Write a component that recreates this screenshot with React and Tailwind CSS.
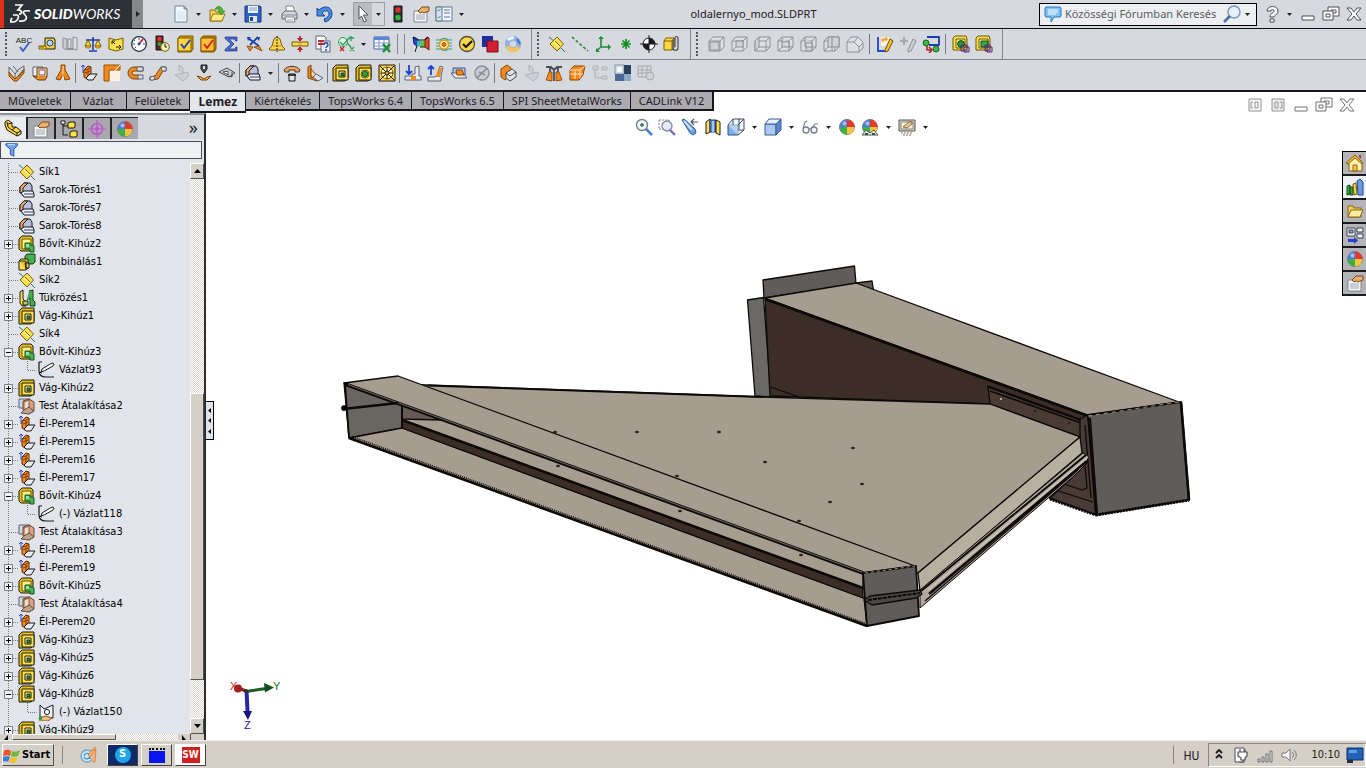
import React from "react";

const c = (x, y, r) => `M${x - r} ${y}a${r} ${r} 0 1 0 ${2 * r} 0a${r} ${r} 0 1 0 ${-2 * r} 0z`;
const K = "#1a1a1a";
const Y = "#ffe14a";
const YD = "#7a5c00";
const O = "#f28a1c";
const B = "#1c3fae";
const G = "#8d9094";
const N = "none";

const CUT = [
  ["M1 4l3-3h12v13l-3 3H1z", "#e8bf1a", K],
  ["M4 4h12v12H4z", Y, K],
  ["M7 7h6v6H7z", "#fff4a0", K],
  ["M9 9h3v3H9z", "#2f8f3c", "#113a17"],
];
const BOSS = [
  ["M1 4l3-3h9l2 2v11l-2 2H3l-2-2z", "#e8bf1a", K],
  ["M4 4h9v10H4z", "#fff08a", "#6b5200"],
  ["M7 8h5v2h3l1 1v6h-4v-3H7z", "#47b354", "#14541d"],
  ["M8 9h3v3H8z", "#9be0a0"],
];
const PLANE = [
  ["M1 2l5 4M13 13l4 4", N, "#2a7a62"],
  ["M9 2l6.500 7L9 16 2 9z", Y, YD],
  ["M6 7l6 5", N, "#fff"],
  ["M7 6l5 5", N, YD],
];
const CORNER = [
  ["M2 12V6l4-4h6l2 3v5", "#b8c0dd", K],
  ["M2 6l4-4h4L5 7v5H2z", "#e8a868", K],
  ["M3 12l3-2h9l1 3v3H6z", "#eef0fb", K],
  ["M3 12l3 4M6 13h10", N, "#34416e"],
];
const FLANGE = [
  ["M3 9V1M1 3l2-2 2 2", N, "#2447d8"],
  ["M4 6l4-4 3 1v8l-4 4-3-2z", O, "#5f2d00"],
  ["M8 5v9M4 6l4-1 3-2M5 9l5-2", N, "#7a3a00"],
  ["M6 14l4-4h7l-4 6H8z", "#e8ebef", K],
];
const BEND = [
  ["M1 2h11v9H1z", "#cfd6e6", "#59607a"],
  ["M5 4l6-2 5 3v9l-5 3-6-4z", "#d8a183", "#6a4634"],
  ["M6 5l5-2v8l-5 2z", "#f3d9c6", "#8a5a40"],
  ["M11 10l5 4-5 3-8-1 3-3z", "#c5a189", "#5e5148"],
];
const SPHERE = [
  [c(9, 9, 7.5), "#e8e8e8", "#777"],
  ["M9 9V1.500A7.500 7.500 0 0 1 16.500 9z", "#e33a30"],
  ["M9 9h7.500A7.500 7.500 0 0 1 9 16.500z", "#f0c63c"],
  ["M9 9v7.500A7.500 7.500 0 0 1 1.500 9z", "#3cb043"],
  ["M9 9H1.500A7.500 7.500 0 0 1 9 1.500z", "#4b7fe0"],
  [c(6.5, 5.5, 2), "#ffffff88"],
];
const CARD = [
  ["M2 6h13v11H2z", "#f6f6f6", "#80858c"],
  ["M4 10h9M4 12h9M4 14h9", N, "#9aa4b5"],
  ["M6 6l4-4h7v4l-5 2-2-1-2 1z", "#e9b06c", "#77481c"],
];
const cube = (extra) => [
  ["M1 6h11v10H1zM1 6l4-4h11v10l-4 4M12 6l4-4", "#dde0e4", G],
  [extra, "#cfd2d6", G],
];

const ICONS = {
  newdoc: [["M3 1h9l3 3v13H3z", "#f2f8ff", "#74849b"], ["M12 1v3h3z", "#b8c9de", "#74849b"], ["M5 6h8v9H5z", "#e0ecf9"]],
  open: [
    ["M2 5h5l1 2h6v9H2z", "#f4d35a", "#97700c"],
    ["M2 16l3-7h12l-3 7z", "#ffeb8c", "#97700c"],
    ["M7 4c3-4 7-3 8 2h2l-4 4-3-4h2c-1-2-3-2-5-2z", "#4cb92e", "#24750f", 0.6],
  ],
  save: [["M1 1h15l1 1v15H1z", "#2f62c2", "#16367b"], ["M4 1h10v7H4z", "#f0f6ff"], ["M5 3h8M5 5h8", N, "#7da0d6"], ["M5 11h8v6H5z", "#dfe8f5"], ["M6 12h3v4H6z", "#24488f"]],
  print: [["M6 7V1h7l2 6z", "#fff", "#7e8792"], ["M2 9l3-3h10l2 3v5H2z", "#d3d8df", "#5d6672"], ["M5 12h9l1 5H6z", "#fbfbfb", "#7e8792"], ["M3 10h13", N, "#818a96"], ["M7 15h6", N, "#8fa6c8"]],
  undo: [["M1 3l2 2c5-5 13-4 13 4 0 4-3 7-7 8l-1-3c3-1 5-3 5-5 0-4-5-4-7-1l3 3H1z", "#4a8be0", "#164a9c"]],
  cursor: [["M5 1l9 9H9.500l3 6-2.500 1-2.500-6L5 14z", "#fff", "#50545c"]],
  traffic: [["M5 1h8v16H5z", "#2d3138", "#15181c"], [c(9, 5, 2.7), "#e0312d"], [c(9, 12.5, 2.7), "#2ebb3b"]],
  card: CARD,
  options: [["M1 2h16v14H1z", "#f2f7ff", "#64758f"], ["M1 2h6v14H1z", "#d7e2f2", "#64758f"], ["M9 5h6M9 8h6M9 12h6", N, "#4f74bb"], ["M2.500 5l1 1 2-2M2.500 12l1 1 2-2", N, "#1f9c34"]],
  abc: [["M5 12l3 4 6-8", N, "#3f62c9", 2]],
  tape: [["M7 3h9l1 2v9H7z", "#f2d33b", K], [c(12, 8, 3), "#b8d4f4", "#2246a5"], ["M1 11h7v3H1z", "#ffe14a", YD], ["M3 11v2M5 11v2", N, YD]],
  mirror: [["M2 3l4 1v11l-4-2z", "#c9ccd1", G], ["M7 4h3v8l-3 3zM12 2l4 1v12l-4-1z", "#dfe1e4", G], ["M6 14h6", N, G, 2]],
  scale: [["M9 2v13M2 5h14M5 16h8", N, B, 1.6], ["M4 5l-3 6h6zM14 5l-3 6h6z", Y, YD], ["M1 11h6l-1 2H2zM11 11h6l-1 2h-4z", "#f5b81f", YD, 0.6]],
  section: [["M2 3l7 2 7-2v11l-7 2-7-2z", Y, YD], ["M5 6l3 3M5 9V6h3M9 12h5M12 10l2 2-2 2", N, K]],
  gauge: [[c(9, 9, 7.3), "#fff", "#252a38", 1.3], ["M9 9l4-5", N, "#d2201e", 1.8], ["M4 5l1 1M9 3v2M3 9h2M13 9h2M5 13l1-1", N, "#2c4cb0"], [c(9, 9, 1.4), "#1c3fae"]],
  rebuild: [["M3 1h7v14H3z", "#5b2420", K], [c(6.5, 4, 2.2), "#e5322b"], [c(6.5, 9, 2), "#2bad38"], [c(12, 12, 4.3), "#f6efb0", "#6b6415"], ["M12 9v3h2", N, K]],
  checkb: [["M2 3l2-2h13v13l-2 3H2z", "#d19a00", YD], ["M2 3h13v13H2z", "#ffd53b", YD], ["M5 9l3 4 6-8", N, "#2442ba", 2]],
  checkr: [["M2 3l2-2h13v13l-2 3H2z", "#d17400", YD], ["M2 3h13v13H2z", "#ffbe3b", YD], ["M5 9l3 4 6-8", N, "#d4271c", 2]],
  sigma: [["M3 2h12v4h-1.500l-1-2H7l5 5-5 5h6l1-2H15v4H3v-1.500L9 9 3 3.500z", "#4a70d8", "#16307f", 0.7]],
  sensor: [["M3 3l11 8M13 2L5 10", N, B, 1.8], ["M2 2h4L3 6zM15 2h-4l3 4z", B], ["M2 11l6 1-3 4zM9 12l5-1 3 5z", O, "#7d3b00", 0.8]],
  draft: [["M9 2l3 2 2 7 3 3-1 1H2l-1-1 3-3 2-7z", "#ffd64a", YD], ["M5 11h8", N, "#c78d10"], ["M9 1v16", N, K, 1, "2 1"]],
  thick: [["M1 7h6l2 1 2-1h6v4h-6l-2-1-2 1H1z", "#ffd94f", YD], ["M9 1v4M9 17v-4", N, "#b32222", 1.6], ["M6 3h6L9 7zM6 15h6l-3-4z", "#b32222"]],
  compare: [["M2 1h8l2 2v11H2z", "#fff", "#5b6575"], ["M7 6h9v11H7z", "#eaf1fd", "#5b6575"], ["M4 6h6M4 9h6", N, "#c7242c", 1.8], ["M10 10c0-3 4-3 4 0 0 1.500-2 1.500-2 3M12 14v2", N, "#1d47b5", 1.4]],
  checkx: [[c(6, 7, 4.5), "#ddf4e3", "#2f9e58"], ["M3 7l3 3 7-8M12 3h5M14 1v5M10 8l4 4M13 12l4 4M17 12l-4 4", N, "#2f9e58", 1.3], ["M3 12l4 4M7 12l-4 4", N, "#c92525", 1.4]],
  table: [["M1 2h15v12H1z", "#fff", "#3e5da8"], ["M1 2h15v3H1z", "#5a87dd"], ["M1 8h15M1 11h15M6 5v9M11 5v9", N, "#7c98d0"], ["M10 9l7 8M17 9l-7 8", N, "#1e8c38", 2.4]],
  zebra: [["M1 2l3 1 3 2-2 6-3-2z", "#2744cd", "#142578"], ["M5 4l4 2-1 5-3 1z", "#35b8c9"], ["M9 6h4v6H8z", "#5cc83b"], ["M13 4l2-2 2 1v12l-4-3z", "#e0482a", "#7b1e0e"], ["M5 11l-2 6M8 12l5 0M1 2l4 3 8 0 3-3", N, K]],
  stripes: [["M1 5h4c3-2 6-2 8 0h4M1 8h4M1 11h4M1 14h5c3 2 5 2 7 0h4M13 8h4M13 11h4", N, "#3d9f75", 1.2], [c(9, 9.5, 4.5), "#fff2a0", "#d99a1c", 1.4], [c(9, 9.5, 2), "#f2701c", "#a33b12", 0.8]],
  okcircle: [[c(9, 9, 7.5), "#ffd447", "#4e4a3e", 1.3], ["M5 9l3 3 6-6", N, K, 2.2]],
  squares: [["M1 1h11v11H1z", "#1d2f9e"], ["M6 6h11v11H6z", "#d21f31", "#7d0f1c"]],
  ring: [[c(9, 9, 5.7), N, "#8fb2e8", 5], ["M3.500 11a6 6 0 0 0 11 1", N, "#f4c65a", 4], ["M4 5a6 6 0 0 1 6-2", N, "#f1f6ff", 3], ["M13 4l3 5", N, "#3f6fc0", 2]],
  plane: PLANE,
  axis: [["M1 2l16 14", N, "#2c8a34", 1.6, "3 2"]],
  csys: [["M7 2v10h9M7 12l-5 4", N, "#1d8b31", 1.6], ["M4 4l3-3 3 3zM14 9l3 3-3 3zM2 13v4h4z", "#1d8b31"]],
  point: [["M9 4v10M4 9h10M5.500 5.500l7 7M12.500 5.500l-7 7", N, "#139023", 1.7]],
  com: [[c(9, 9, 6), "#fff", K], ["M9 9V3a6 6 0 0 1 6 6zM9 9v6a6 6 0 0 1-6-6z", K], ["M9 0v18M0 9h18", N, K]],
  clip: [["M1 6l2-3h8v10l-2 2H1z", "#ffd941", YD], ["M1 6h8v9M9 6l2-3", N, YD], ["M10 5v8c0 3 5 3 5 0V3c0-2-3-2-3 0v9", N, "#454a54", 1.2]],
  cubeA: cube("M2 7h9v8H2z"),
  cubeB: cube("M5 6h7v6H5zM1 16l4-4"),
  cubeC: cube("M1 6l4-4v10l-4 4zM5 12h11"),
  cubeD: cube("M5 2v10h11M1 16l4-4M5 7h7v5"),
  cubeE: cube("M5 2v10h11M6 8h6v8H6z"),
  cubeF: cube("M5 2h11v10H5zM1 16l4-4M9 2v14"),
  cubeG: [["M1 7l4-5h7l5 5v6l-4 4H1z", "#dde0e4", G], ["M1 7h7l5 5v5M8 7l4-5M13 12l4-4", N, G]],
  sketch3: [["M2 2v14h7", N, "#2446c4", 1.8], ["M5 2h8v9H5z", "#fff5d6"], ["M7 3v4M5 5h4M10 2v4M8 4h4", N, O], ["M9 15l5-11 3 2-5 10-3 1z", "#f4be3a", "#6d4b00"]],
  plusPen: [["M5 2v8M1 6h8", N, "#9b9ea2", 1.6], ["M9 15l5-11 3 2-5 10-3 1z", "#cdd0d3", G]],
  blocks: [["M5 2h12v8H7", N, B, 1.8], [c(4, 8, 3), "#3fb54a", "#16691e"], [c(14, 14, 3), "#3fb54a", "#16691e"], ["M5 11v4h4M7 12l3 3-3 3", N, "#b72222", 1.6]],
  capA: [["M1 3l2-2h11l1 3v9l-2 2H1z", Y, "#6b5200"], ["M4 4h9v9H4z", "#fff3a0", "#6b5200"], [c(9, 9, 3.4), "#249b32", "#10491a"], ["M9 10h6v6H9zM12 12h5v5h-5z", N, "#55267d"]],
  capB: [["M1 3l2-2h11l1 3v9l-2 2H1z", Y, "#6b5200"], ["M4 4h9v9H4z", "#fff3a0", "#6b5200"], ["M6 6h7v6H6z", "#37a445", "#10491a"], ["M10 10h5v6h-5zM12 12h5v5h-5z", N, "#55267d"]],
  convert: [["M1 3l6 7v5l-6-6z", "#dfe3e9", "#5b6575"], ["M1 8l6 7 4-4 5-6v4l-7 8H6L1 12z", O, "#8a4200"], ["M7 10l4-5 5-3v5l-6 6M5 2l5 6", N, "#5b6575"]],
  boxface: [["M2 3h10v9H2z", "#eef1f5", "#5b6575"], ["M6 4h10v9H6z", "#f8d8b8", "#6d3a0b"], ["M2 12l5 4h7l2-3M6 13l-4-1", O, "#6d3a0b"], ["M8 6h6v5H8z", "#eef1f5", "#8a5a30"]],
  loft: [["M7 1h4v5l5 9-5 1-2-6-3 6-4-1 5-9z", O, "#8a4200"], ["M9 2v14", N, "#ffe0b3"]],
  flange: FLANGE,
  miter: [["M1 1h16v5H6v11H1z", O, "#a24d00"], ["M7 7h10v10H7z", "#fff1e0"], ["M17 1L7 12", N, "#fff"]],
  hem: [["M17 3H8a6 6 0 0 0 0 12h5v-4H8a2 2 0 0 1 0-4h9z", O, "#7d4310"], ["M11 3h6v4h-6zM12 11h5v4h-5z", "#d9dde3", "#5b6575"]],
  jog: [["M1 13l5-1 6-9h5v4h-3l-5 8-8 1z", O, "#7d4310"], ["M12 3h5v4h-4zM1 13l5-1-1 4H1z", "#dfe3e9", "#5b6575"]],
  greyfold: [["M7 7V1l4 3v6M3 11l8-2 5-1v5l-5 4z", "#cccfd3", "#b0b3b7"]],
  press: [["M6 1h6v4l-3 4-3-4z", "#4c4f57", K], ["M8 2h2v3H8z", "#dadde2"], ["M2 12l4 1 3 2 3-2 4-1-4 4H6z", "#f6b23c", "#7d4310"]],
  unfold: [["M1 8l8-4 8 5-6 4z", "#cfd3d9", "#454a54"], ["M5 8l5-1v4z", "#fff", "#454a54"], ["M14 8v5l-4-1", N, "#454a54"]],
  corner: CORNER,
  vent: [["M1 6c3-5 13-5 16 0l-1 2h-4V6H6v2H2z", "#f0a15c", "#4a3a2c"], ["M6 10h6v7H6z", "#dfe3e9", K], ["M5 11h8", N, K, 1.6]],
  gusset: [["M2 3l3-2v12l8 2-2 2-9-3z", O, "#7d4310"], ["M5 13V5l8 9z", "#fbd9b0", "#7d4310"], ["M7 13l3-3 7 4-5 3z", "#dfe3e9", "#5b6575"]],
  cut: CUT,
  hole: [...CUT.slice(0, 2), [c(10, 10, 4), "#f2fbd8", YD], [c(10, 10, 2.8), "#2e9d40", "#145a1e"]],
  ventfan: [["M1 1h16v16H1z", "#ffd53b", K], [c(9, 9, 6), "#fff3a0", YD], ["M2 2l14 14M16 2L2 16M9 3v12M3 9h12", N, K], [c(9, 9, 2), "#f2a81c", K]],
  down: [["M5 1v8M2 7l3 3 3-3", N, "#1f43cf", 1.8], ["M1 12h7v-2h3V3l4-1v10h2v4H1z", "#e6e9ee", "#5b6575"], ["M7 12h5v4H7z", O]],
  up: [["M4 11V2M1 5l3-3 3 3", N, "#1f43cf", 1.8], ["M1 13h7l2-2 3-9 3 1-2 9v5H1z", "#e6e9ee", "#5b6575"], ["M9 13l3-10 3 1-2 9z", O]],
  flat: [["M3 4h12v8H3z", "#b9c5e8", "#33509c"], ["M1 9h12l4 5H5z", "#e6e9ee", "#5b6575"], ["M6 6h6l2 5H7z", O, "#8a4200"]],
  nobend: [[c(9, 9, 7), "#c9ccd0", "#8b8e92", 1.4], ["M4 14L14 4M6 8l6 3", N, "#8b8e92", 1.6]],
  rip: [["M2 5l6-4 4 3v5l-6 7-4-3z", O, "#8a4200"], ["M7 9l6-4 4 3v5l-6 4-4-3z", "#e1e5eb", "#454a54"], ["M7 9l4 3 6-4", N, "#454a54"]],
  tops1: [["M1 3h5l3 3 3-3h5M5 3v14M13 3v14M9 6v11", N, "#4b5264", 1.8], ["M1 16l3-8h3v9zM17 16l-3-8h-3v9z", O, "#8a4200", 0.8]],
  tops2: [["M2 6l4-4h11l-2 9-4 5H2z", O, "#8a4200"], ["M2 6h10v8M7 6v9M12 6l5-4M2 10h13", N, "#ffe3bd"]],
  greynodes: [["M2 2h5v4H2zM11 3h5v3h-5zM11 12h5v3h-5zM4 6v8h7", "#cfd2d6", "#b0b3b7"]],
  quad: [["M1 1h9v9H1z", "#d5dbe4", "#8392a8"], ["M10 1h7v9h-7z", "#28415f"], ["M1 10h9v7H1z", "#496a95"], ["M10 10h7v7h-7z", "#8ea8c9"], ["M3 3h5v5H3z", "#f5f7fa"]],
  greytable: [["M1 2h13v11H1zM1 6h13M1 9h13M5 2v11M10 2v11", "#d8dbde", "#a5a8ac"], [c(13, 12, 4), "#cfd2d6", "#a5a8ac"]],
  zoomfit: [[c(7, 7, 5.5), "#eef4f8", "#767f88", 1.4], ["M5 7h4M7 5v4", N, "#3b6f47", 1.4], ["M11 11l6 6", N, "#4d82c7", 2.6]],
  zoomarea: [["M1 2h10v9H1z", N, "#8a8fa0", 1, "2 1"], [c(9, 8, 5), "#e5eaf4cc", "#8088a0", 1.3], ["M12 12l5 5", N, "#7a6cb4", 2.4]],
  prevview: [["M1 2l2-1 11 10 1 4-3 2-3-2z", "#6ca0e0", "#2e5c9e"], ["M3 3l8 9", N, "#dcebff", 1.8], ["M10 4h7M13 1l-3 3 3 3", N, "#4b5264", 1.2]],
  sectionview: [["M2 4l4-3v13l-4 2z", "#ffe14a", K], ["M6 2h6v12H6z", "#5b86d0", "#213f7c"], ["M12 2l4 2v13l-4-2z", "#ffe14a", K], ["M9 3v11", N, "#bcd2f4", 1.6]],
  orient: [["M1 7h10v10H1z", "#7fb0e8", "#29517f"], ["M1 7l5-6h11v11l-6 5M11 7l6-6M12 1v10M6 1v6M11 12h6", "#e8f1fb88", "#3b4c63"]],
  shaded: [["M1 6h11v11H1z", "#a9c9f2", "#3d5c94"], ["M1 6l4-5h12l-5 5z", "#e8f2fd", "#3d5c94"], ["M12 6l5-5v11l-5 5z", "#5a85cd", "#3d5c94"]],
  glasses: [[c(5, 12, 3), "#f0f4f8", "#76808c", 1.3], [c(13, 12, 3), "#f0f4f8", "#76808c", 1.3], ["M2 11L4 4l2-1M10 11l4-5h3M8 11h2", N, "#76808c", 1.2]],
  sphere: SPHERE,
  scene: [...SPHERE, ["M1 17l4-5 4 3 4-3 4 5z", "#e9efe9", "#4b5c4b"], ["M4 15h3v2H4zM11 15h3v2h-3z", "#3d4a3d"]],
  monitor: [["M1 2h16v11H1z", "#d5d5d0", "#56534a"], ["M3 4h12v7H3z", "#f4f1e2", "#8d8878"], ["M5 9l6-5h3v2l-5 4z", "#e9c98c", "#77582a", 0.8], ["M3 15h12M5 17h9", N, "#77736a", 1, "2 1"]],
  part: [["M1 3l3-2 4 3v4l4 0 5 4v3l-4 2-5-3-5-3-2-5z", "#ffd53b", K], ["M4 5l4-1M8 11l4-3M3 3l1 5 4 3 5 3 4-2M13 14v3", N, K]],
  feature: CARD,
  config: [["M3 1v14h5M3 6h5", N, K], ["M8 3l2-1h5v5l-1 1H8zM10 12l2-1h5v5l-1 1h-6z", Y, K], ["M1 1h4v3H1z", "#fff", K]],
  target: [[c(9, 9, 5.5), N, "#c153d6", 1.6], [c(9, 9, 2), "#c153d6"], ["M9 0v18M0 9h18", N, "#c153d6", 1.2]],
  funnel: [["M1 2h13v2l-4 4v8l-4-2V8L1 4z", "#6ca2f0", "#1f4aa8"], ["M3 3h8", N, "#e3eeff"]],
  boss: BOSS,
  combine: [["M7 3l2-2h8v8l-2 2H7z", "#46ad50", "#113f18"], ["M1 8l2-2h7v9l-2 2H1z", Y, K], ["M1 8h7v9M7 10h4v5H8z", "#e5c82c", K]],
  pattern: [["M2 3l3-2v9l3 3v4H4l-2-3z", Y, K], ["M11 2l4-1v10l2 2v4h-5V9l-3 2", "#46ad50", "#113f18"], ["M5 12h5v4H5z", "#a9d94a", K]],
  bend: BEND,
  sketch: [["M1 1v9c0 4 3 6 7 6h8M1 1h3M1 11l3 1", N, K, 1.2], ["M4 8l10-6 2 1-1 2-9 5-3 1z", "#fff", K]],
  sketchplane: [["M2 2l4 4 9-4v13H2z", "#eef4fa", K], [c(9, 9, 2.6), "#fff", K], ["M1 15l7-2 6 2-4 3H2z", "#f0bd7c", "#8b5a1c"], ["M1 13h3v4H1z", "#32a042"]],
  home: [["M2 9l7-7 7 7v8H3V9z", "#fff2b0", "#8a5d0a"], ["M0 9l9-8 8 8-1 1-7-6-7 6z", "#f3b92d", "#8a5d0a"], ["M7 11h4v6H7z", "#f8c94a", "#8a5d0a"], ["M13 1h2v4l-2-2z", "#c4331f"]],
  books: [["M1 8l3-1v9l-3 1zM4 9h3v8H4z", "#35a83d", "#12511a"], ["M7 6l3-1 1 11-3 1z", "#f3d24a", "#7a5c00"], ["M11 3l3-2 3 3v13h-5z", "#6b9ae0", "#25498a"]],
  folder: [["M2 4h5l1 2h7v9H2z", "#f6cf56", "#8a6510"], ["M2 15l3-7h12l-3 7z", "#ffeea0", "#8a6510"]],
  palette: [["M1 2h8v8H1zM11 2h6v4h-6zM11 8h6v4h-6z", "#eef2f6", "#3c4451"], ["M3 4h4v3H3z", "#8a9eb8", "#3c4451"], ["M2 13h6v-2l4 3.500L8 18v-2H2z", "#2443c9"]],
  bubble: [["M2 2h14l1 1v8l-1 1h-6l-3 5v-5H2l-1-1V3z", "#7fc0f0", "#2a79bd"], ["M4 5h10M4 7h10M4 9h8", N, "#fff"]],
  lens: [[c(11, 7, 6), "#e4f1fb", "#7a95b5", 1.4], ["M7 11l-6 6", N, "#4a6fae", 2.6]],
  help: [["M4 6c0-6 11-6 11 0 0 4-4 4-4 6H7c0-4 4-4 4-6 0-2-3-2-3 0zM7 14h4v3H7z", "#fff", "#4c5057"]],
  minus: [["M3 11h12v4H3z", "#fff", "#4c5057"]],
  restore: [["M6 2h11v9H6zM9 5h5v3H9z", "#fff", "#4c5057"], ["M1 6h10v9H1zM4 9h4v3H4z", "#fff", "#4c5057"]],
  close: [["M2 3h4l3 4 3-4h4l-5 6 5 6h-4l-3-4-3 4H2l5-6z", "#fff", "#4c5057"]],
  paneL: [["M3 3h12v12H3z", "#f6f6f6", "#77797d"], ["M7 6H5v6h2M9 6h3v6H9z", N, "#77797d"]],
  paneR: [["M3 3h12v12H3z", "#e9e9e9", "#77797d"], ["M11 6h2v6h-2M6 6h3v6H6z", N, "#77797d"]],
  winflag: [["M1 4c3-2 5-1 7 0L7 9C5 8 3 8 0 9z", "#e8572a"], ["M9 4c3 1 5 1 8-1l-2 6c-2 1-5 1-7 0z", "#6fb83a"], ["M0 10c3-1 5-1 7 0l-2 5c-1-1-3-1-6 0z", "#3c7be0"], ["M8 10c2 1 5 1 7 0l-2 5c-2 1-5 1-7 0z", "#f5c22c"]],
  paint: [[c(8, 10, 6), "#d4e9f6", "#6fa6cf", 1.4], ["M5 10c1-4 6-3 6 0s-5 4-6 1M11 8v5", N, "#4895cf", 1.4], ["M9 9l7-8 1 2-6 8zM12 4h5l-1 12h-3", "#f4b27a", "#d87a3c", 0.8]],
  plug: [["M2 2h9v14H2z", "#fff", "#4c5057"], ["M5 6h9v4l-2 2v2H8v-2l-3-2zM7 3v3M12 3v3M10 14v2H6", "#fff", "#4c5057", 1.2]],
  signal: [["M1 13h2v3H1zM5 11h2v5H5zM9 8h2v8H9zM13 5h2v11h-2z", "#eee", "#6c6e72"]],
  sound: [["M1 7h4l4-4v12l-4-4H1z", "#f8f8f8", "#77797d"], ["M11 6c2 2 2 4 0 6M13 4c3 3 3 7 0 10", N, "#77797d"]],
  desktop: [["M1 2h16v12H1z", "#1f62b8", "#0e2f63"], ["M1 14h6v3H1z", "#2b2f38"], ["M3 4h8v3H3z", "#5fa0e8"]],
  chevup: [["M7 7l3-3 3 3M7 12l3-3 3 3", N, K, 1.8]],
};

function Icon({ name, small }) {
  return (
    <svg viewBox="0 0 18 18" aria-hidden="true" className={(small ? "size-4" : "size-[18px]") + " block shrink-0"}>
      {ICONS[name].map(([d, fill, stroke, w, dash], i) => (
        <path key={i} d={d} fill={fill} stroke={stroke || "none"} strokeWidth={w || 1} strokeDasharray={dash} strokeLinejoin="round" />
      ))}
      {name === "abc" && (
        <text x="9" y="8" textAnchor="middle" fontSize="8" fontFamily="Liberation Sans, sans-serif" fill={K}>ABC</text>
      )}
    </svg>
  );
}

const Tool = ({ name }) => (
  <button type="button" aria-label={name} className="flex h-6 w-[23px] shrink-0 items-center justify-center">
    <Icon name={name} />
  </button>
);
const Drop = ({ label = "more", className = "w-[13px]" }) => (
  <button type="button" aria-label={label} className={className + " flex h-6 shrink-0 items-center justify-center"}>
    <svg viewBox="0 0 5 3" className="h-[3px] w-[5px]"><path d="M0 0h5L2.500 3z" fill="#222" /></svg>
  </button>
);
const Sep = () => <span className="mx-px h-5 w-px shrink-0 bg-[#777b80]" />;
const Grip = () => <span className="mx-[5px] h-6 w-0 shrink-0 border-l-2 border-dotted border-[#55585d]" />;
const Edge = () => <span className="h-full w-px shrink-0 bg-[#85888e]" />;

/* "|" thin separator, "||" wide separator, ">" drop arrow, "#" grip, "/" band edge */
function Bar({ items, dropClass }) {
  return items.map((n, i) => {
    if (n === "|") return <Sep key={i} />;
    if (n === "||") return <span key={i} className="mx-[3px] h-5 w-px shrink-0 bg-[#777b80]" />;
    if (n === ">") return <Drop key={i} className={dropClass} />;
    if (n === "#") return <Grip key={i} />;
    if (n === "/") return <Edge key={i} />;
    return <Tool key={i} name={n} />;
  });
}

const FILE_TOOLS = ["newdoc", ">", "open", ">", "save", ">", "print", ">", "undo", ">"];
const ROW_ONE = [
  "abc", "tape", "mirror", "scale", "section", "gauge", "rebuild", "checkb", "checkr", "sigma", "sensor", "draft", "thick", "compare", "checkx", ">", "table",
];
const ROW_TWO = [
  "convert", "boxface", "loft", "|", "flange", "miter", "hem", "jog", "greyfold", "press", "unfold", "|", "corner", ">", "|",
  "vent", "gusset", "|", "cut", "hole", "ventfan", "|", "down", "up", "flat", "nobend", "|", "rip", "greyfold", "tops1", "tops2", "greynodes", "quad", "greytable",
];
const VIEW_TOOLS = ["zoomfit", "zoomarea", "prevview", "sectionview", "orient", ">", "shaded", ">", "glasses", ">", "sphere", "scene", ">", "monitor", ">"];

const TABS = ["Műveletek", "Vázlat", "Felületek", "Lemez", "Kiértékelés", "TopsWorks 6.4", "TopsWorks 6.5", "SPI SheetMetalWorks", "CADLink V12"];

const TREE = [
  ["plane", "Sík1"], ["corner", "Sarok-Törés1"], ["corner", "Sarok-Törés7"], ["corner", "Sarok-Törés8"],
  ["boss", "Bővít-Kihúz2", "+"], ["combine", "Kombinálás1"], ["plane", "Sík2"], ["pattern", "Tükrözés1", "+"],
  ["cut", "Vág-Kihúz1", "+"], ["plane", "Sík4"], ["boss", "Bővít-Kihúz3", "-"], ["sketch", "Vázlat93", "child"],
  ["cut", "Vág-Kihúz2", "+"], ["bend", "Test Átalakítása2"], ["flange", "Él-Perem14", "+"], ["flange", "Él-Perem15", "+"],
  ["flange", "Él-Perem16", "+"], ["flange", "Él-Perem17", "+"], ["boss", "Bővít-Kihúz4", "-"], ["sketch", "(-) Vázlat118", "child"],
  ["bend", "Test Átalakítása3"], ["flange", "Él-Perem18", "+"], ["flange", "Él-Perem19", "+"], ["boss", "Bővít-Kihúz5", "+"],
  ["bend", "Test Átalakítása4"], ["flange", "Él-Perem20", "+"], ["cut", "Vág-Kihúz3", "+"], ["cut", "Vág-Kihúz5", "+"],
  ["cut", "Vág-Kihúz6", "+"], ["cut", "Vág-Kihúz8", "-"], ["sketchplane", "(-) Vázlat150", "child"], ["cut", "Vág-Kihúz9", "+"],
];

function TreeRow({ icon, label, kind }) {
  const child = kind === "child";
  const box = kind === "+" || kind === "-";
  return (
    <li className="flex h-[18px] items-center">
      <svg viewBox="0 0 18 18" className="size-[18px] shrink-0">
        <path d={child ? "M8.500 0v18" : "M8.500 0v18M9 9.500h9"} stroke="#7b7e84" strokeDasharray="1 1" fill="none" />
        {box && <path d="M4.500 5.500h8v8h-8z" fill="#f4f5f8" stroke="#7b7e84" />}
        {box && <path d={kind === "+" ? "M6 9.500h5M8.500 7v5" : "M6 9.500h5"} stroke="#000" fill="none" />}
      </svg>
      {child && (
        <svg viewBox="0 0 20 18" className="h-[18px] w-5 shrink-0">
          <path d="M9.500 0v9.500h9" stroke="#7b7e84" strokeDasharray="1 1" fill="none" />
        </svg>
      )}
      <Icon name={icon} />
      <a href="#feature" className="ml-[3px] whitespace-nowrap">{label}</a>
    </li>
  );
}

const raised = "border border-t-white border-l-white border-r-[#55524e] border-b-[#55524e] bg-[#d4d0c8]";
const track = "bg-[repeating-conic-gradient(#ffffff_0_25%,#dad7d0_0_50%)] bg-[length:2px_2px]";

function FeaturePanel() {
  return (
    <aside className="flex w-[206px] shrink-0 flex-col border-t-2 border-r-2 border-t-[#8e92a0] border-r-[#2a2c33] bg-[#e1e4eb]">
      <div className="flex h-6 items-end bg-[#d6d9de]">
        <div className="flex items-stretch border-black">
          {["part", "feature", "config", "target", "sphere"].map((n, i) => (
            <button key={n} type="button" aria-label={n}
              className={(i ? "w-7 border-t border-l-2 border-[#202228] bg-[#a9a8ad]" : "w-[26px] bg-[#e9ebef]") + " flex h-[22px] items-center justify-center"}>
              <Icon name={n} />
            </button>
          ))}
        </div>
        <button type="button" aria-label="Expand panel" className="mr-1.5 ml-auto self-center text-lg leading-4">»</button>
      </div>
      <label className="mt-0.5 mr-0.5 flex h-[18px] items-center border border-[#4b4e57] bg-[#eef0f2] pl-1">
        <Icon name="funnel" small />
        <input aria-label="Filter" className="h-3 w-full min-w-0 bg-transparent outline-none" />
      </label>
      <div className="flex min-h-0 flex-1 pt-1">
        <ul className="min-w-0 flex-1 overflow-hidden font-['DejaVu_Sans_Condensed','DejaVu_Sans',sans-serif] text-[11px] leading-[18px] text-black">
          {TREE.map(([icon, label, kind]) => <TreeRow key={label} icon={icon} label={label} kind={kind} />)}
        </ul>
        <div className={"flex w-[14px] flex-col " + track}>
          <button type="button" aria-label="Scroll up" className={"flex h-4 items-center justify-center " + raised}>
            <svg viewBox="0 0 7 4" className="h-1 w-[7px]"><path d="M0 4h7L3.500 0z" /></svg>
          </button>
          <span className="flex-[215]" />
          <span className={"flex-[286] " + raised} />
          <span className="flex-[38]" />
          <button type="button" aria-label="Scroll down" className={"flex h-4 items-center justify-center " + raised}>
            <svg viewBox="0 0 7 4" className="h-1 w-[7px]"><path d="M0 0h7L3.500 4z" /></svg>
          </button>
        </div>
      </div>
      <div className={"flex h-[6px] " + track}>
        <span className="flex w-3 items-end justify-center bg-[#d4d0c8]"><svg viewBox="0 0 4 5" className="h-[5px] w-1"><path d="M4 0v5H0z" /></svg></span>
        <span className={"w-[104px] " + raised} />
        <span className="flex-1" />
        <span className="flex w-3 items-end justify-center bg-[#d4d0c8]"><svg viewBox="0 0 4 5" className="h-[5px] w-1"><path d="M0 0v5h4z" /></svg></span>
        <span className="w-[14px] border-l border-[#55524e] bg-[#d4d0c8]" />
      </div>
    </aside>
  );
}

const HOLES = [[555, 432], [637, 432], [719, 432], [853, 448], [765, 462], [862, 484], [830, 502], [677, 476], [799, 521], [558, 466], [680, 511], [801, 555]];

function Model() {
  return (
    <svg viewBox="206 113 1160 627" preserveAspectRatio="xMinYMin meet" className="block h-full w-full" role="img" aria-label="Sheet metal part">
      <g stroke="#0c0a09" strokeWidth="1.3" strokeLinejoin="round">
        <path d="M747.500 300l16-2.500L771 397l-16-1z" fill="#6b6965" />
        <path d="M763 280l91.500-14 1.500 18-92 14z" fill="#5f5c59" />
        <path d="M856 283l16-2 1.500 9-4 1z" fill="#5f5c59" />
        <path d="M765 298L1088 416l8 99-46-16-60-95-220-8z" fill="#3c2e27" />
        <path d="M771 387l28 10" fill="none" />
        <path d="M765 298l91-15 323 119-91 13z" fill="#a69c8f" />
        <path d="M988 386l92 33 1 18-91-33z" fill="#4a3b34" />
        <path d="M988 387l92 33M990 391l91 32" fill="none" strokeWidth="1.600" />
        <path d="M765 299L1088 416" fill="none" strokeWidth="2.600" />
        <path d="M1080 419l8-4 8 100-46-17 30-28z" fill="#483a34" />
        <path d="M1055 490l38 12M1064 484l18 6 5-2-2-22M1085 425l6 73" fill="none" />
        <path d="M1088 415l93-13 8 98-93 15z" fill="#5f5c59" strokeWidth="2" />
        <path d="M1090 418l7 95" fill="none" strokeWidth="2" />
        <path d="M1088 416l91-14" fill="none" stroke="#b8aea0" strokeWidth=".8" strokeDasharray="4 4" />
        <path d="M1181 402l8 98" fill="none" strokeWidth="2.600" />
        <path d="M1096 515l93-15M1050 499l46 16" fill="none" strokeWidth="3" strokeDasharray="2 1" />
        <path d="M398 384l365 13 227 7 90 33-162 136-30 20z" fill="#a69c8f" />
        <path d="M428 385.500L763 397" strokeWidth="2" fill="none" />
        <path d="M918 573l162-136 2 16-162 138z" fill="#b9afa0" />
        <path d="M920 590L1083 453l5 3-1 7-12 12L920 608z" fill="#b3a99c" strokeWidth="1" />
        <path d="M921 591L1086 455" fill="none" strokeWidth="2" />
        <path d="M929 594L1087 461" fill="none" strokeWidth="2.600" />
        <path d="M928 590L1088 457" fill="none" stroke="#cfc6b9" strokeWidth="1.400" />
        <path d="M925 601L1078 470" fill="none" strokeWidth="1.400" />
        <path d="M344 383l58 22v23l-53 10z" fill="#686660" />
        <path d="M349 438l53-10 462 170 3 28z" fill="#a69c8f" />
        <path d="M402 403l461 169v17L402 420z" fill="#a69c8f" />
        <path d="M402 404l39 16-39-1z" fill="#665b52" />
        <path d="M402 420l461 168v10L402 428z" fill="#3c2e27" />
        <path d="M402 420l461 168" fill="none" strokeWidth="2.600" />
        <path d="M344 383l54-7 517 190-52 7z" fill="#a69c8f" />
        <path d="M345 384l518 189" fill="none" strokeWidth="3.600" />
        <path d="M348 384.500l515 188" fill="none" stroke="#8d8375" strokeWidth=".8" />
        <path d="M345 383l4 55M402 405v23" fill="none" strokeWidth="1.800" />
        <path d="M343 409l55-6" fill="none" strokeWidth="2.600" />
        <circle cx="344" cy="408" r="2.200" />
        <path d="M349 438l518 188" fill="none" strokeWidth="2.600" />
        <path d="M353 437l514 187" fill="none" strokeWidth="1.600" strokeDasharray="1 1" />
        <path d="M863 573l53-7 3 50-52 10z" fill="#5f5c59" strokeWidth="1.800" />
        <path d="M865 573l50-7" fill="none" stroke="#b8aea0" strokeWidth=".8" strokeDasharray="3 3" />
        <path d="M864 600l6-4 50-6 2 4-6 4-44 7z" fill="#4b4744" />
        <path d="M868 600l52-7" fill="none" strokeWidth="2" strokeDasharray="4 1" />
      </g>
      {HOLES.map(([x, y]) => <ellipse key={x} cx={x} cy={y} rx="2" ry="1.300" fill="#2a211c" />)}
      <g fill="#2a211c"><circle cx="1001" cy="399" r="1" fill="#d8d0c4" /><circle cx="1035" cy="411" r="1.300" /><circle cx="1069" cy="423" r="1.300" /></g>
      <g>
        <path d="M246 691l-8-3" stroke="#8b1c1c" strokeWidth="3" /><circle cx="238" cy="688.500" r="4" fill="#a02020" />
        <path d="M246 691.500l20-3" stroke="#1d5c24" strokeWidth="3" /><path d="M264 683l10 4.500-9 5z" fill="#14501b" />
        <path d="M246.500 691l1 20" stroke="#2727a8" strokeWidth="4" /><path d="M243 711h9l-4 9z" fill="#15157c" />
        <circle cx="246" cy="691" r="2" fill="#33302d" />
        <g fontFamily="Liberation Sans, sans-serif" fontSize="11">
          <text x="230" y="690" fill="#c92222">X</text>
          <text x="273" y="690" fill="#1d6e28">Y</text>
          <text x="244" y="729" fill="#2020b0">Z</text>
        </g>
      </g>
    </svg>
  );
}

function SolidLogo() {
  return (
    <div className="flex h-full w-[143px] shrink-0">
      <span className="w-1 bg-[#e0311c]" />
      <div className="flex flex-1 items-center bg-[#2c3136] pl-1.5 text-white">
        <svg viewBox="0 0 22 22" className="size-[22px]" fill="none" stroke="#fff" strokeWidth="1.700">
          <path d="M5 2h7L8 7c5 0 4 4 1 4M3 12h4c3 0 1 7-4 7H0l2-4M20 8c-7-1-8 1-5 4s1 7-6 6" />
        </svg>
        <p className="ml-0.5 font-['Lato',sans-serif] text-sm leading-4 italic"><b className="font-black">SOLID</b>WORKS</p>
      </div>
      <button type="button" aria-label="Menu" className="flex w-[11px] items-center justify-center bg-[#85878b]">
        <svg viewBox="0 0 4 6" className="h-1.5 w-1"><path d="M0 0v6l4-3z" fill="#222" /></svg>
      </button>
    </div>
  );
}

function TaskButton({ label, className, children }) {
  return <button type="button" aria-label={label} className={"flex h-[22px] w-[31px] items-center justify-center border border-t-white border-l-white border-r-[#44423e] border-b-[#44423e] " + className}>{children}</button>;
}

export default function App() {
  return (
    <div className="flex h-screen min-h-[480px] flex-col overflow-hidden bg-white font-['Noto_Sans','Open_Sans',sans-serif] text-[#1e2024]">
      <header className="flex h-[29px] shrink-0 items-center border-b border-[#101114] bg-[#d6d9de]">
        <SolidLogo />
        <div className="ml-[26px] flex shrink-0 items-center">
          <Bar items={FILE_TOOLS} />
          <div className="mr-px ml-1 flex h-6 items-center border border-[#9c9fa5]">
            <button type="button" aria-label="Select" className="flex h-full w-[18px] items-center justify-center bg-[#b9bcc2]"><Icon name="cursor" /></button>
            <Drop label="Select options" className="w-3" />
          </div>
          <Bar items={["traffic", "card", "options", ">"]} />
        </div>
        <h1 className="flex-1 truncate px-2 text-center text-[11px] leading-4">oldalernyo_mod.SLDPRT</h1>
        <label className="flex h-[23px] w-[218px] shrink-0 items-center border border-black bg-[#eceef1] pl-1">
          <Icon name="bubble" />
          <input aria-label="Keresés" defaultValue="Közösségi Fórumban Keresés" className="ml-[3px] w-[158px] bg-transparent text-[11px] text-[#5a5d63] outline-none" />
          <Icon name="lens" />
          <Drop label="Search options" />
        </label>
        <div className="mr-px ml-[3px] flex shrink-0 items-center">
          <Bar items={["help", ">", "minus", "restore", "close"]} />
        </div>
      </header>

      <div role="toolbar" aria-label="Eszközök" className="flex h-[31px] shrink-0 items-center border-b border-[#85888e] bg-[#d6d9de]">
        <Grip />
        <Bar items={ROW_ONE} />
        <span className="mr-[6px] ml-1 h-5 w-px bg-[#85888e]" />
        <span className="mr-1 h-5 w-px bg-[#85888e]" />
        <Bar items={["zebra", "stripes", "okcircle", "squares", "ring"]} />
        <span className="w-[7px]" />
        <Bar items={["/", "#"]} />
        <span className="w-px" />
        <Bar items={["plane", "axis", "csys", "point", "com", "clip"]} />
        <span className="w-[7px]" />
        <Bar items={["/", "#"]} />
        <span className="w-0.5" />
        <Bar items={["cubeA", "cubeB", "cubeC", "cubeD", "cubeE", "cubeF", "cubeG", "||", "sketch3", "plusPen", "blocks", "||", "capA", "capB"]} />
        <span className="w-[7px]" />
        <Edge />
      </div>

      <div role="toolbar" aria-label="Lemez" className="flex h-8 shrink-0 items-center border-b-2 border-[#17181c] bg-[#d6d9de] pb-1 pl-[5px]">
        <Bar items={ROW_TWO} />
      </div>

      <div className="flex h-[21px] shrink-0 items-start justify-between">
        <nav className="flex h-full items-start text-[11px] leading-4">
          {TABS.map((t) => (
            <button key={t} type="button"
              className={(t === "Lemez" ? "h-[21px] bg-[#e3e6eb] text-xs font-bold" : "h-[19px] bg-[#acabb1]") + " min-w-[56px] border-r border-b-2 border-[#16171b] px-2 whitespace-nowrap last:border-r-2"}>
              {t}
            </button>
          ))}
        </nav>
        <div className="relative z-10 mt-px mr-2 flex items-center opacity-80">
          <Bar items={["paneL", "paneR", "minus", "restore", "close"]} />
        </div>
      </div>

      <main className="flex min-h-0 flex-1">
        <FeaturePanel />
        <section className="relative min-w-0 flex-1 overflow-hidden bg-white">
          <Model />
          <div className="absolute inset-x-0 top-[2px] flex justify-center pr-2">
            <Bar items={VIEW_TOOLS} dropClass="w-[14px]" />
          </div>
          <button type="button" aria-label="Collapse panel" className="absolute top-[288px] left-0 flex h-[39px] w-2 flex-col items-center justify-evenly border border-l-0 border-black bg-[#e1e4eb]">
            {[0, 1, 2].map((k) => <svg key={k} viewBox="0 0 3 5" className="h-[5px] w-[3px]"><path d="M3 0v5L0 2.500z" /></svg>)}
          </button>
          <div className="absolute top-[38px] right-0 flex flex-col border-t border-l border-black">
            {["home", "books", "folder", "palette", "sphere", "card"].map((n) => (
              <button key={n} type="button" aria-label={n} className={(n === "books" ? "bg-[#eef0f5]" : "bg-[#b3b3b8]") + " flex h-6 w-[23px] items-center justify-center border-b-2 border-[#1c1d21]"}>
                <Icon name={n} />
              </button>
            ))}
          </div>
        </section>
      </main>

      <footer className="flex h-7 shrink-0 items-center border-t border-[#f2f0ec] bg-[#d4d0c8] pl-0.5 font-['DejaVu_Sans_Condensed','DejaVu_Sans',sans-serif] text-[11px]">
        <button type="button" className={"flex h-[22px] w-[52px] items-center gap-px pt-0.5 text-[11px] font-bold text-black " + raised}>
          <Icon name="winflag" />Start
        </button>
        <span className="ml-2 h-[18px] w-px bg-[#8a8781]" />
        <span className="mr-2.5 ml-4 flex"><Icon name="paint" /></span>
        <div className="flex gap-[3px]">
          <TaskButton label="Skype" className="bg-[#0f2a66]"><span className="flex size-4 items-center justify-center rounded-full bg-[#1fa6ea] font-bold text-white">S</span></TaskButton>
          <TaskButton label="Window" className="bg-[#d4d0c8]"><span className="flex size-4 flex-col"><span className="h-[3px] border-b-2 border-dotted border-black" /><span className="mt-px flex-1 bg-[#0a14f0]" /></span></TaskButton>
          <TaskButton label="SolidWorks" className="bg-white"><span className="flex h-4 w-[18px] items-center justify-center bg-[#cf2020] text-[10px] font-bold text-white">SW</span></TaskButton>
        </div>
        <div className="ml-auto flex h-full items-center">
          <span className="h-[18px] w-px bg-[#8a8781]" />
          <span className="mx-[9px] pt-0.5 text-xs">HU</span>
          <div className="flex h-6 items-center gap-[6px] border border-t-[#8a8781] border-r-white border-b-white border-l-[#8a8781] pr-px">
            <Icon name="chevup" />
            <Icon name="plug" />
            <Icon name="signal" />
            <Icon name="sound" />
            <time className="ml-1.5 pt-0.5">10:10</time>
            <Icon name="desktop" />
          </div>
        </div>
      </footer>
    </div>
  );
}
